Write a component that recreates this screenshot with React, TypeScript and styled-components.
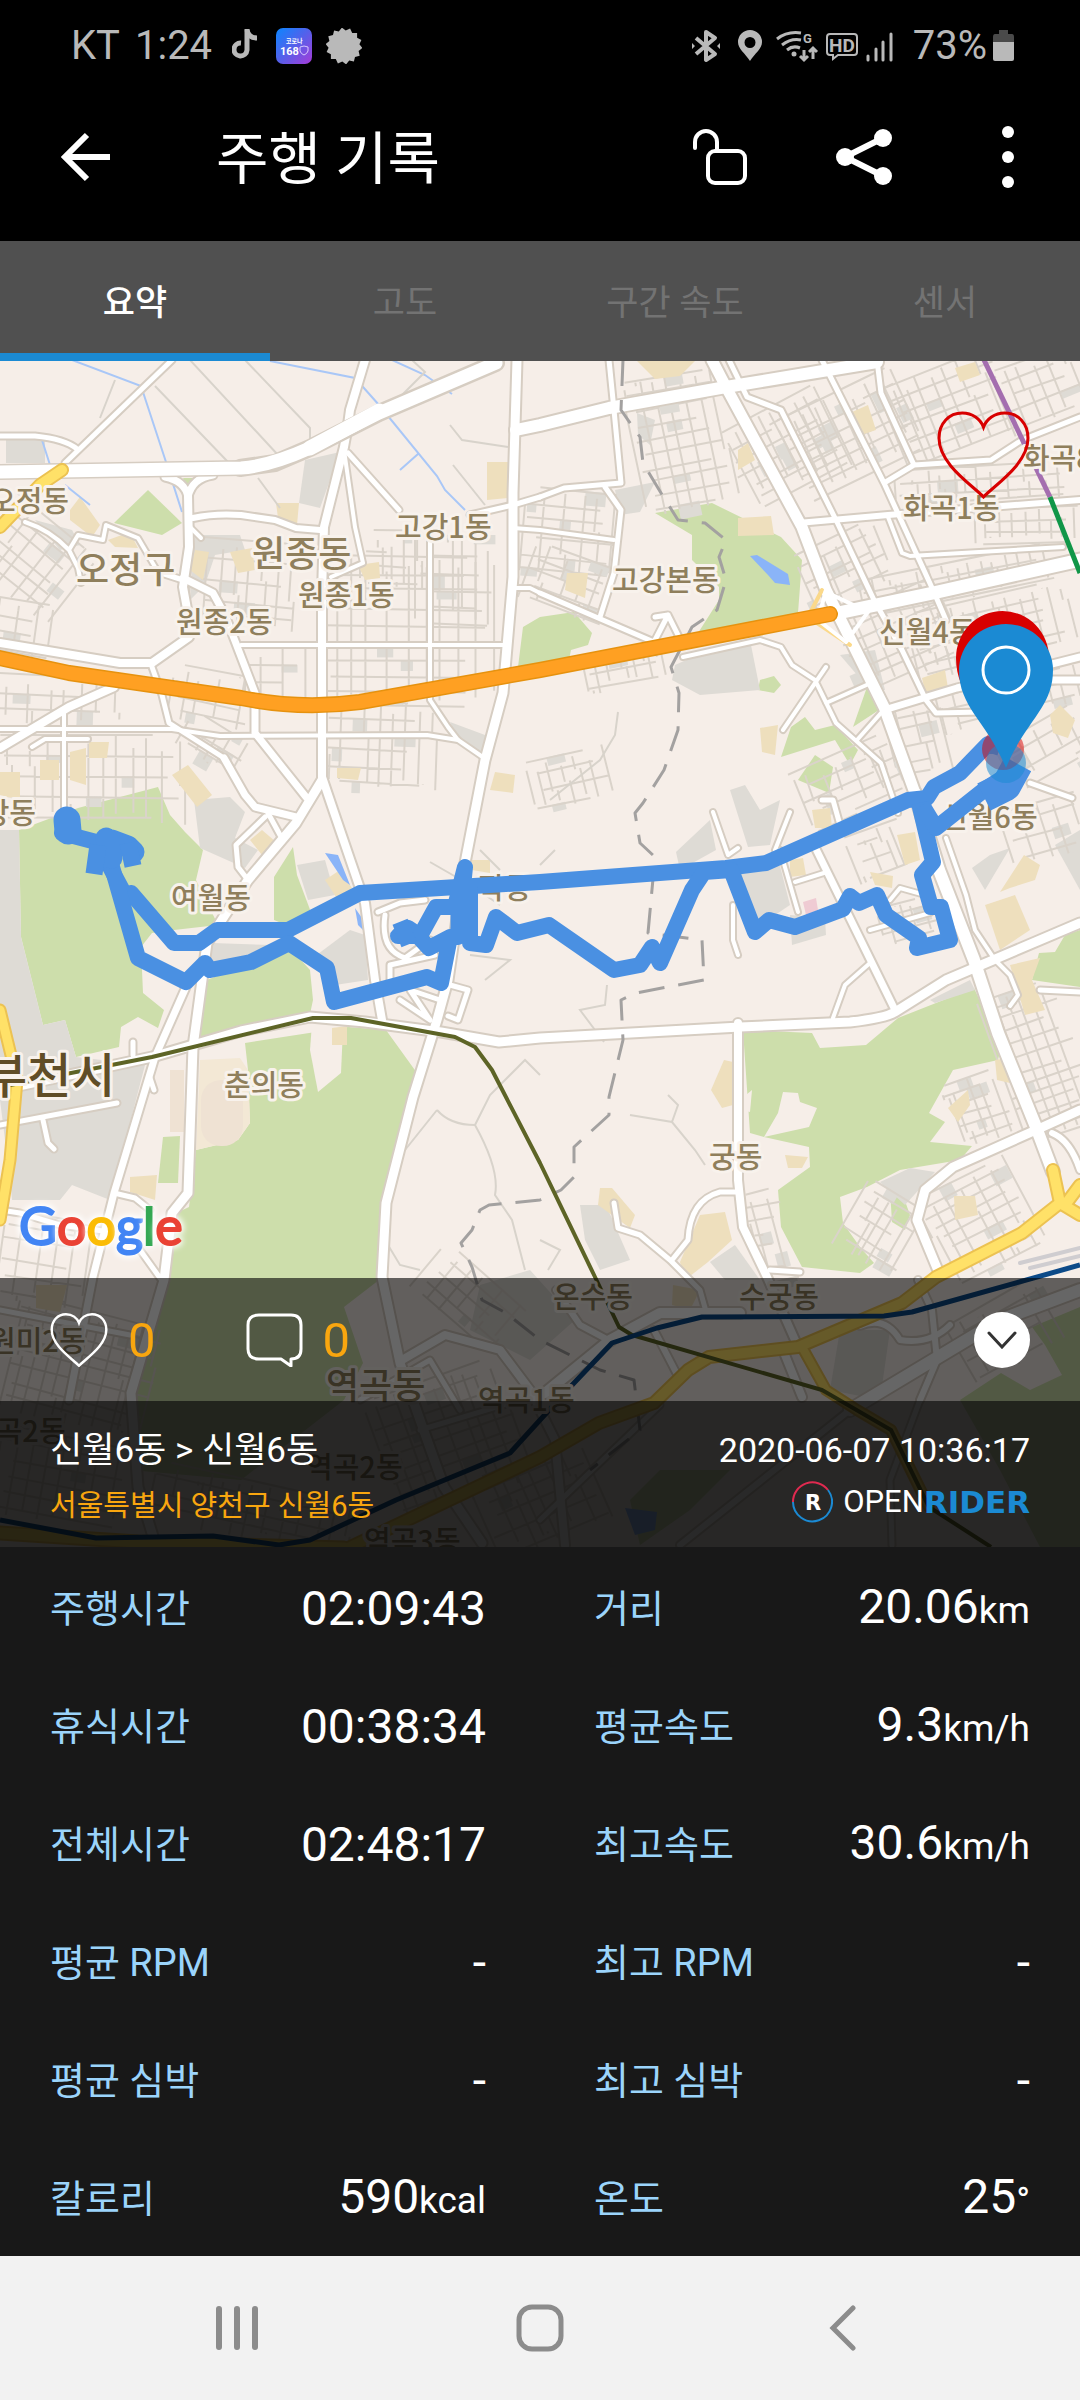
import React, { useState } from "react";
import styled, { createGlobalStyle, css } from "styled-components";

const GlobalStyle = createGlobalStyle`
  * { box-sizing: border-box; }
  body { margin: 0; background: #181818; }
  button { font: inherit; color: inherit; background: none; border: 0; padding: 0; cursor: pointer; }
`;

const FONT = `Roboto, "Noto Sans CJK KR", sans-serif`;

/* ---------- page frame ---------- */

const Screen = styled.div`
  display: flex;
  flex-direction: column;
  min-height: 100vh;
  background: #181818;
  color: #fff;
  font-family: ${FONT};
`;

const StatusBar = styled.div`
  display: flex;
  justify-content: space-between;
  align-items: center;
  height: 92px;
  padding: 0 66px 0 71px;
  background: #000;
  color: #b9b9b9;
  font-size: 40px;
  line-height: 48px;
`;

const StatusGroup = styled.div<{ $gap: number }>`
  display: flex;
  align-items: center;
  gap: ${(p) => p.$gap}px;
`;

const StatusText = styled.span<{ $space?: number }>`
  margin: 0 ${(p) => p.$space ?? 0}px;
`;

const BatteryReading = styled.span`
  display: flex;
  align-items: center;
  gap: 6px;
  margin-left: 10px;
`;

const AppBar = styled.header`
  display: flex;
  align-items: center;
  height: 149px;
  padding: 0 48px 20px 60px;
  background: #000;
`;

const Title = styled.h1`
  flex: 1;
  margin: 0 0 0 106px;
  padding-top: 6px;
  font-size: 57px;
  font-weight: 400;
  line-height: 68px;
`;

const ToolButtons = styled.div`
  display: flex;
  align-items: center;
  gap: 89px;
`;

const IconButton = styled.button`
  display: grid;
  place-items: center;
`;

const Tabs = styled.div`
  display: grid;
  grid-template-columns: repeat(4, 1fr);
  height: 120px;
  background: #505050;
`;

const Tab = styled.button<{ $active: boolean }>`
  padding: 14px 0 0;
  border-bottom: 8px solid transparent;
  font-size: 35px;
  line-height: 42px;
  color: #737373;
  ${(p) =>
    p.$active &&
    css`
      color: #fff;
      font-weight: 500;
      border-bottom-color: #1b8ad3;
    `}
`;

/* ---------- map ---------- */

const MapArea = styled.section`
  position: relative;
  display: flex;
  flex: 1;
  flex-direction: column;
  justify-content: flex-end;
  min-height: 1186px;
  overflow: hidden;
`;

const MapCanvas = styled.svg`
  position: absolute;
  inset: 0;
  width: 100%;
  height: 100%;
`;

const Favourite = styled.button`
  position: absolute;
  top: 50px;
  right: 50px;
`;

const GoogleMark = styled.div`
  position: relative;
  display: flex;
  padding: 0 19px;
  margin-bottom: 21px;
  font-family: Lato, sans-serif;
  font-size: 52px;
  line-height: 64px;
`;

const Letter = styled.span<{ $color: string }>`
  color: ${(p) => p.$color};
  -webkit-text-stroke: 2px ${(p) => p.$color};
  filter: drop-shadow(0 0 3px #fff) drop-shadow(0 0 3px #fff);
`;

const ActionBar = styled.div`
  position: relative;
  display: flex;
  align-items: center;
  justify-content: space-between;
  height: 123px;
  padding: 0 50px;
  background: rgba(0, 0, 0, 0.6);
`;

const Counters = styled.div`
  display: flex;
  gap: 90px;
`;

const Counter = styled.button`
  display: flex;
  align-items: center;
  gap: 20px;
  color: #f9a60f;
  font-size: 49px;
  line-height: 60px;
`;

const Count = styled.span`
  padding-top: 3px;
`;

const Collapse = styled.button`
  display: grid;
  place-items: center;
  width: 56px;
  height: 56px;
  border-radius: 50%;
  background: #fff;
`;

const RideInfo = styled.div`
  position: relative;
  display: flex;
  justify-content: space-between;
  height: 146px;
  padding: 26px 50px 0;
  background: rgba(3, 3, 3, 0.85);
`;

const InfoColumn = styled.div<{ $end?: boolean }>`
  display: flex;
  flex-direction: column;
  gap: ${(p) => (p.$end ? 7 : 9)}px;
  align-items: ${(p) => (p.$end ? "flex-end" : "flex-start")};
`;

const Route = styled.div`
  font-size: 35px;
  line-height: 48px;
`;

const Address = styled.div`
  font-size: 29px;
  line-height: 44px;
  color: #f9a60f;
`;

const StartedAt = styled.time`
  font-size: 34px;
  line-height: 46px;
`;

const Brand = styled.div`
  display: flex;
  align-items: center;
  font-size: 31px;
  line-height: 44px;

  svg {
    margin-right: 10px;
  }
`;

const BrandStrong = styled.span`
  font-family: "DejaVu Sans", sans-serif;
  font-weight: 700;
  font-size: 31px;
  color: #1b8ad3;
`;

/* ---------- statistics ---------- */

const Stats = styled.dl`
  display: grid;
  grid-template-columns: 1fr 1fr;
  column-gap: 108px;
  margin: 0;
  padding: 0 50px 1px;
`;

const Stat = styled.div`
  display: flex;
  justify-content: space-between;
  align-items: center;
  height: 118px;
  padding-top: 5px;
`;

const StatLabel = styled.dt`
  font-size: 38px;
  line-height: 56px;
  color: #9bd4fb;
`;

const StatValue = styled.dd`
  margin: 0;
  font-size: 48px;
  line-height: 60px;
`;

const Unit = styled.span`
  font-size: 37px;
`;

/* ---------- system navigation ---------- */

const SystemNav = styled.nav`
  display: grid;
  grid-template-columns: repeat(3, 1fr);
  height: 144px;
  padding: 0 86px;
  background: #f2f2f2;
`;

/* ---------- map data ---------- */

type Road = { d: string; w: number };

const greens = [
  "78,808 158,787 170,815 185,832 203,850 196,880 218,925 174,930 152,933 141,947 143,993 164,1010 158,1028 138,1017 121,1027 119,1047 76,1057 65,1020 43,1025 21,937 19,830",
  "293,847 297,875 312,915 289,926 274,920 274,877",
  "207,980 289,947 310,970 313,1000 310,1014 241,1027 196,1040",
  "245,1043 348,1027 386,1030 417,1073 386,1193 379,1280 344,1307 363,1363 344,1400 241,1480 131,1470 134,1401 168,1280 172,1215 189,1207 196,1150 238,1140 250,1123 248,1070",
  "743,1030 812,1033 820,1048 866,1045 898,1018 974,988 1001,1047 998,1060 953,1070 929,1113 945,1122 930,1142 972,1146 960,1160 900,1170 867,1187 840,1197 843,1223 860,1247 874,1263 860,1273 802,1267 781,1227 778,1190 810,1167 809,1147 764,1137 750,1133",
  "655,513 712,503 781,537 802,560 798,613 698,633 719,600 719,587 692,560 692,535",
  "518,667 523,627 540,617 574,612 592,633 588,645 571,650 569,660",
  "148,490 182,523 162,535 114,523",
  "1080,930 1065,935 1055,952 1039,953 1032,980 1080,987",
  "867,687 879,710 853,727",
  "805,717 815,730 835,725 858,750 850,765 835,740 781,757 791,727",
  "815,755 833,767 829,793 798,780",
  "760,680 774,676 781,685 774,693 758,690",
  "183,478 195,478 188,488",
  "1080,1307 1032,1327 1045,1345 1062,1375 1030,1390 1001,1373 960,1400 1000,1470 1040,1547 1080,1547",
  "163,1137 180,1136 178,1183 158,1183",
  "890,1190 900,1187 910,1215 905,1230 892,1222",
  "630,1500 660,1470 730,1470 690,1510 640,1545",
];

const clearings = [
  "783,1092 798,1093 800,1102 817,1108 809,1127 764,1137 778,1113",
  "313,1010 343,1028 341,1073 318,1092 310,1050",
  "740,1100 752,1090 750,1112 742,1110",
];

const greys = [
  "0,830 19,830 21,937 43,1025 65,1020 76,1057 145,1065 110,1200 72,1185 60,1200 12,1200 10,1180 0,1100",
  "194,800 230,797 245,812 235,838 258,850 245,868 200,848",
  "305,460 340,452 320,508 299,503",
  "6,440 45,440 45,463 6,463",
  "35,520 72,530 80,545 60,550",
  "195,535 240,535 245,550 215,555 205,585 190,600",
  "450,722 485,735 485,757 460,745",
  "675,665 720,645 750,640 760,690 700,695 672,680",
  "710,820 716,850 680,870 676,852",
  "730,790 745,785 760,810 780,800 770,845 748,847",
  "735,868 780,866 790,905 760,925",
  "790,915 825,918 826,935 792,945",
  "580,1205 606,1205 630,1260 600,1270 585,1240",
  "297,865 325,860 335,895 308,900",
  "310,960 350,930 365,935 368,980 335,985",
  "1055,845 1080,830 1080,890",
  "990,855 1010,848 985,890 972,868",
  "880,1182 910,1168 935,1172 905,1205",
  "710,1262 735,1245 760,1280 725,1280",
  "840,1330 890,1330 880,1400 830,1390",
  "480,1285 530,1270 575,1320 530,1360 470,1330",
  "840,655 875,650 885,690 870,690",
  "930,1000 970,980 975,990 935,1003",
  "212,943 272,945 290,948 250,962 210,966",
  "637,413 655,420 650,445 638,435",
  "615,490 655,482 640,512 620,515",
];

const tans = [
  "637,361 695,361 680,376 655,379",
  "852,412 868,405 876,430 864,434",
  "738,450 748,443 755,460 738,470",
  "738,518 771,516 774,535 738,536",
  "567,573 588,573 585,598 565,590",
  "922,678 945,670 948,688 925,692",
  "1050,715 1060,705 1075,720 1068,738 1053,733",
  "70,510 80,497 100,525 92,537 70,520",
  "108,540 130,532 138,548 115,547",
  "195,550 209,552 203,580 190,570",
  "230,552 252,548 255,570 238,573",
  "276,503 299,503 297,525 278,518",
  "487,462 508,462 508,498 487,500",
  "358,565 379,562 380,578 365,580",
  "172,775 188,765 212,795 197,807",
  "337,768 361,768 358,780 337,778",
  "40,760 59,760 59,780 40,780",
  "70,752 86,748 86,785 70,780",
  "89,742 109,742 107,758 89,758",
  "0,772 20,772 20,800 0,795",
  "495,772 515,775 513,793 490,790",
  "250,840 262,830 276,842 262,855",
  "325,880 340,870 352,888 338,900",
  "332,1028 347,1026 347,1045 332,1045",
  "130,1177 157,1175 155,1200 130,1192",
  "897,835 915,832 920,860 905,865",
  "1000,892 1024,855 1040,865 1035,880 1010,888",
  "985,905 1015,895 1030,930 1000,950",
  "1010,965 1040,958 1032,980 1045,1010 1025,1015",
  "790,860 803,858 806,875 790,877",
  "870,872 893,876 892,888 875,885",
  "724,1060 733,1062 733,1105 722,1108 711,1090",
  "785,1155 808,1157 802,1168 788,1168",
  "600,1188 612,1188 635,1215 630,1228 598,1205",
  "700,1215 725,1212 732,1240 708,1262 685,1280 680,1262",
  "954,1196 975,1196 978,1215 955,1220",
  "995,1060 1008,1058 1010,1083 997,1080",
  "36,1285 67,1285 60,1312 36,1308",
  "673,1285 700,1290 690,1310 672,1305",
  "948,1108 968,1090 970,1105 958,1122",
  "812,810 830,808 832,828 815,828",
  "760,728 778,725 775,755 762,752",
  "955,368 975,362 980,375 960,382",
  "472,860 490,860 490,873 472,870",
];

const waters = [
  "750,556 757,555 788,574 790,585 775,583 768,575",
  "325,853 338,855 350,885 343,880",
  "355,908 362,918 368,935 358,925",
  "625,1508 657,1512 655,1530 635,1535",
];

const roads: Road[] = [
  { w: 5, d: "M0 436L35 436Q65 439 77 449" },
  { w: 5, d: "M172 360L65 463" },
  { w: 4, d: "M25 522Q50 530 69 550L78 568L81 583M69 550L78 535L103 540L106 525L138 538L158 572" },
  { w: 5, d: "M158 572L183 580" },
  { w: 7, d: "M165 477Q185 481 188 497Q192 478 213 475" },
  { w: 8, d: "M188 495L189 547L183 587L189 620L189 637L152 663L120 663L0 643" },
  { w: 4, d: "M190 527L201 538" },
  { w: 7, d: "M183 578L213 593L225 615L255 693L255 733L306 797" },
  { w: 6, d: "M193 518Q215 513 241 515L275 520L296 528L320 530" },
  { w: 5, d: "M152 667L162 695L169 723L224 758" },
  { w: 7, d: "M224 758L245 795L255 807L296 817" },
  { w: 8, d: "M0 748L69 707L114 687" },
  { w: 4, d: "M0 729L172 729L220 736L427 735L458 740M64 710L64 810M88 739L45 739L32 747" },
  { w: 4, d: "M241 645L503 645M430 540L430 700L448 727L458 740L487 760" },
  { w: 5, d: "M348 453L399 510M470 515L513 505L540 497" },
  { w: 4, d: "M344 450L355 527L363 563L331 577M513 528L540 530L614 540M516 588L530 588L540 593" },
  { w: 8, d: "M365 360L350 410L348 425L344 447L324 527L322 593L322 777L339 827L365 903L375 980L382 1020" },
  { w: 9, d: "M322 780L296 823L248 880L225 915L207 943L193 1047L188 1193L172 1213L164 1280L131 1393L138 1487L155 1543" },
  { w: 5, d: "M265 817L236 845L238 867L248 880M268 813L280 835" },
  { w: 9, d: "M517 360L513 493L513 577L503 693L485 760L465 863L448 980L437 1020L413 1097L386 1203L382 1277L400 1363L420 1420L444 1487L482 1543" },
  { w: 7, d: "M186 987L155 1057L114 1193L93 1277L69 1400" },
  { w: 9, d: "M0 1090L152 1057L241 1031L310 1017L365 1022L441 1032L499 1042L540 1038L740 1027L850 1022Q885 1018 895 1012L946 980L1080 923" },
  { w: 8, d: "M738 1023L738 1180L743 1227L767 1277L795 1340M785 1355L802 1397" },
  { w: 5, d: "M0 1125L117 1103M43 1120L48 1143L54 1149M150 1078L154 1090M133 1042L133 1055" },
  { w: 5, d: "M114 1193L135 1198L150 1210M0 1210L20 1213L60 1225L110 1232M140 1250L160 1278" },
  { w: 12, d: "M516 430L540 425L609 408L726 387L877 362" },
  { w: 11, d: "M712 360L726 387L802 527L826 590L884 707L915 793" },
  { w: 12, d: "M915 793L939 870L974 960L998 1033L1036 1127L1053 1172" },
  { w: 4, d: "M946 838L966 895L975 930L995 960L1010 975L1018 995L1010 1006" },
  { w: 13, d: "M838 613L933 593L1080 560" },
  { w: 5, d: "M729 360L747 397L781 410L836 520L874 600L902 650L926 700L936 713L981 712" },
  { w: 5, d: "M822 360L884 483L933 590L946 620M877 360L881 393L914 465L991 460L1022 440L1080 417M914 465L884 483" },
  { w: 6, d: "M798 523L888 515L1080 500" },
  { w: 4, d: "M888 517L902 553L910 556L1063 547" },
  { w: 7, d: "M884 710L957 688L1080 657M1030 690L1045 680L1080 680" },
  { w: 5, d: "M609 360L614 410L621 483L564 488L540 497M605 487L621 510L614 573L600 617M540 593L654 642L668 615L655 617M668 615L683 645" },
  { w: 4, d: "M683 657L760 640L781 647L792 665L815 680L836 723L881 763L898 813M857 740L881 713M826 703L871 683M783 730L826 667" },
  { w: 7, d: "M815 847L895 1010" },
  { w: 4, d: "M713 812L728 855L738 848M775 850L790 812M733 905L733 940L738 955M780 850L798 912M795 882L827 872M870 930L930 913M870 963L845 985L833 1018M890 900L900 888L925 895" },
  { w: 5, d: "M822 800L833 800L840 825M1040 990L1080 992M1030 783L1072 798" },
  { w: 9, d: "M1080 1110L1036 1130L953 1167L925 1190L917 1220L939 1273" },
  { w: 6, d: "M1052 1133Q1070 1140 1080 1170M1040 1128L1080 1110M918 1280L932 1310L937 1360L920 1400" },
  { w: 5, d: "M614 1203L618 1228L640 1235L670 1260L700 1290L707 1315M672 1260L688 1240Q690 1200 720 1192L736 1192M770 1270L800 1272" },
  { w: 12, d: "M1080 1290L1000 1320L850 1410" },
  { w: 6, d: "M850 1410L680 1545" },
  { w: 10, d: "M740 1313L660 1313L610 1340L545 1393" },
  { w: 6, d: "M556 1290L580 1325L612 1342M654 1330L680 1380M860 1326Q885 1315 900 1340Q930 1345 950 1325" },
  { w: 8, d: "M402 1360L445 1335L500 1350L530 1390L555 1440L565 1545" },
  { w: 5, d: "M360 1400L430 1360L460 1410M0 1310L130 1335M420 1430L520 1400M540 1520L660 1405M892 1545L890 1480L920 1400" },
  { w: 5, d: "M378 912L400 903L425 900M385 915Q380 950 405 958L430 940M390 990L390 965L435 955M400 1000L430 1020L410 990L440 1000M450 985L468 990L458 1020L448 1016" },
];

const rails: { d: string; color: string; w: number }[] = [
  { color: "#5d6426", w: 4, d: "M0 1087L152 1057L313 1018L351 1018L455 1037L475 1047L492 1070L540 1163L595 1277L619 1327L632 1335L822 1390L891 1430L929 1507L991 1547" },
  { color: "#0c4a88", w: 5, d: "M1080 1265L912 1312L884 1316L702 1317L657 1328L612 1343L574 1383L540 1420L510 1453L396 1500L310 1540L279 1545L213 1536L96 1538L0 1520" },
  { color: "#a46eaf", w: 5, d: "M984 360L1050 497" },
  { color: "#109648", w: 5, d: "M1050 497L1080 573" },
];

const yellows: Road[] = [
  { w: 13, d: "M62 470L40 485L0 527" },
  { w: 12, d: "M0 1010L17 1080L10 1160L0 1220" },
  { w: 13, d: "M1053 1170L1060 1203L1022 1233L936 1277L902 1303L798 1347L709 1357L688 1370L654 1403L599 1423L540 1457L344 1550" },
  { w: 13, d: "M1060 1203L1080 1215M1065 1205L1080 1185" },
  { w: 11, d: "M802 1347L826 1390L857 1410L891 1430L929 1507" },
  { w: 14, d: "M0 1533L138 1542L344 1548" },
];

const creeks =
  "M72 360L141 386L166 462L182 512M270 361L355 378L379 405L437 476L445 490L465 510M392 360L425 375L452 394M65 485L90 505M42 440L50 465M400 470L418 454";

const lanes =
  "M115 380L100 418M155 386L228 462M190 360L278 455M245 360L310 428L310 440M258 478L280 508M450 425L462 440L508 447M453 465L485 505M412 360L425 372L402 395M550 800L600 760L615 735L618 712M500 870L480 850M430 862L470 885L500 905M470 955L510 960L485 980M437 1110Q450 1125 475 1125Q500 1170 495 1195L512 1220L525 1270M437 1110L405 1150M475 1125L490 1095L525 1060L540 1075M630 1115L672 1122L695 1150L705 1165M672 1122L678 1105L668 1095M604 1042L580 1010L605 1005L607 985M540 865L555 850M385 1240L400 1265L420 1270M540 1240L560 1250L548 1270";

const border =
  "M623 360L621 410L640 437L643 463L661 493L678 520L705 523L726 540L719 557L726 580L717 610L692 627L671 667L679 693L678 730L664 770L643 803L635 813L640 843L655 857L648 933L702 940L704 980L636 993L621 1000L623 1040L609 1097L609 1115L574 1147L574 1177L561 1190L540 1200L489 1205L480 1210L472 1230L461 1243L472 1267L482 1300L506 1313L540 1340L600 1370L634 1380L640 1430L590 1470";

/* [centre x, centre y, width, height, angle, street spacing, seed] */
const districts: number[][] = [
  [30, 560, 110, 90, 38, 15, 3],
  [20, 630, 70, 60, 8, 15, 4],
  [90, 780, 190, 90, 0, 17, 5],
  [60, 700, 140, 50, 2, 17, 6],
  [245, 585, 110, 90, 4, 17, 7],
  [410, 630, 175, 150, 0, 17, 8],
  [280, 680, 70, 70, 0, 17, 9],
  [210, 700, 80, 60, 10, 15, 10],
  [380, 745, 110, 90, 2, 17, 11],
  [215, 745, 70, 40, 30, 15, 12],
  [390, 560, 60, 60, 0, 17, 13],
  [460, 580, 90, 90, 0, 17, 14],
  [570, 535, 95, 90, 5, 15, 15],
  [570, 585, 90, 60, 20, 15, 16],
  [680, 450, 90, 120, -12, 13, 17],
  [670, 390, 90, 30, -10, 13, 18],
  [785, 450, 90, 110, 62, 14, 19],
  [850, 435, 90, 130, 64, 14, 20],
  [950, 410, 120, 90, -22, 14, 21],
  [1040, 390, 80, 70, -22, 14, 22],
  [980, 485, 170, 40, -4, 13, 23],
  [1030, 525, 110, 36, -2, 13, 24],
  [845, 570, 70, 90, 64, 14, 25],
  [960, 580, 200, 40, -12, 13, 26],
  [900, 640, 90, 110, 66, 14, 27],
  [990, 630, 160, 70, -14, 14, 28],
  [1010, 700, 140, 40, -14, 14, 29],
  [920, 740, 60, 80, -14, 14, 30],
  [1050, 750, 60, 90, 60, 15, 31],
  [850, 780, 60, 110, 66, 15, 32],
  [630, 670, 90, 36, -12, 14, 33],
  [570, 780, 80, 55, -14, 14, 34],
  [1045, 830, 80, 60, -18, 15, 36],
  [1040, 1060, 80, 150, -20, 13, 37],
  [980, 1110, 60, 70, -20, 13, 38],
  [985, 1220, 110, 100, -28, 15, 39],
  [880, 1230, 70, 80, 30, 14, 40],
  [770, 1240, 40, 100, -15, 15, 41],
  [45, 1260, 90, 90, 8, 17, 42],
  [80, 1370, 150, 120, 14, 15, 43],
  [60, 1480, 130, 90, 10, 17, 44],
  [250, 1510, 200, 60, 12, 17, 45],
  [450, 1440, 140, 130, -20, 15, 46],
  [470, 1300, 110, 60, 40, 17, 47],
  [540, 1500, 120, 90, -24, 17, 48],
  [1010, 1330, 110, 70, -30, 17, 49],
  [880, 850, 60, 50, -22, 15, 50],
  [910, 920, 60, 40, -16, 13, 51],
];

function random(seed: number) {
  let s = seed * 7919 + 13;
  return () => {
    s = (s * 16807) % 2147483647;
    return s / 2147483647;
  };
}

function District({ box }: { box: number[] }) {
  const [cx, cy, w, h, angle, gap, seed] = box;
  const next = random(seed);
  let d = "";
  const blocks: React.ReactNode[] = [];
  for (let y = -h / 2; y <= h / 2; y += gap * (0.7 + next() * 0.6)) {
    const a = -w / 2 + next() * gap;
    const b = w / 2 - next() * gap * 2;
    d += `M${a.toFixed(1)} ${y.toFixed(1)}L${b.toFixed(1)} ${(y + next() * 3).toFixed(1)}`;
    if (next() > 0.55) {
      blocks.push(
        <rect key={y} x={a + next() * w * 0.7} y={y} width={8 + next() * 14} height={7 + next() * 9} />
      );
    }
  }
  for (let x = -w / 2; x <= w / 2; x += gap * (0.7 + next() * 0.7)) {
    const split = (next() - 0.5) * h;
    const top = -h / 2 + next() * gap;
    d += `M${x.toFixed(1)} ${top.toFixed(1)}L${x.toFixed(1)} ${split.toFixed(1)}`;
    d += `M${(x + (next() > 0.6 ? 5 : 0)).toFixed(1)} ${split.toFixed(1)}V${(h / 2 - next() * gap).toFixed(1)}`;
  }
  return (
    <g transform={`translate(${cx} ${cy}) rotate(${angle})`}>
      <g fill="#dedbd5">{blocks}</g>
      <path d={d} fill="none" stroke="#dad3ca" strokeWidth="2" />
    </g>
  );
}

/* [text, left x, baseline, size] */
const labels: [string, number, number, number][] = [
  ["오정동", -11, 512, 29],
  ["오정구", 76, 583, 36],
  ["원종동", 252, 567, 36],
  ["고강1동", 395, 538, 29],
  ["원종1동", 298, 606, 29],
  ["원종2동", 176, 633, 29],
  ["고강본동", 612, 591, 29],
  ["화곡1동", 903, 519, 29],
  ["화곡8동", 1023, 469, 29],
  ["신월4동", 879, 643, 29],
  ["신월6동", 941, 828, 29],
  ["도당동", -44, 824, 29],
  ["작동", 478, 899, 29],
  ["여월동", 171, 909, 29],
  ["춘의동", 224, 1096, 29],
  ["궁동", 709, 1168, 29],
  ["온수동", 553, 1308, 29],
  ["수궁동", 739, 1308, 29],
  ["역곡동", 326, 1399, 36],
  ["역곡1동", 478, 1411, 29],
  ["역곡2동", 306, 1478, 29],
  ["역곡3동", 364, 1552, 29],
  ["원미2동", -11, 1352, 29],
  ["심곡2동", -31, 1442, 29],
];

const track = [
  "M67 820L62 833L100 843L112 841L110 867L126 897L131 893L174 943L199 943L217 930L288 930L360 893L540 882L726 868L766 863L908 800L927 798L934 787L960 773L988 744L1000 748",
  "M110 860L138 958L186 982L205 963L210 970L251 962L289 943L327 968L334 1002L427 977L441 983L450 937L429 948L418 936L398 936L408 928L420 936L436 907L455 907L465 867L458 937L470 890L470 943L486 945L496 917L517 933L549 925L614 970L640 965L652 947L660 963L692 890L704 872L731 870L755 932L769 920L795 927L843 909L850 896L859 903L877 895L886 915L919 938L917 948L950 940L941 907L931 907L922 875L933 862L919 803",
  "M922 805L936 828L984 790L1012 772",
];

function RideMap() {
  return (
    <MapCanvas viewBox="0 361 1080 1186" preserveAspectRatio="xMidYMid slice" role="img" aria-label="주행 경로 지도">
      <rect y="361" width="1080" height="1186" fill="#f6eee8" />
      <g fill="#cddeab">{greens.map((p) => <polygon key={p} points={p} />)}</g>
      <g fill="#f6eee8">{clearings.map((p) => <polygon key={p} points={p} />)}</g>
      <g fill="#dedbd5">{greys.map((p) => <polygon key={p} points={p} />)}</g>
      {districts.map((box) => <District key={box[6]} box={box} />)}
      <g fill="#eedfbd">{tans.map((p) => <polygon key={p} points={p} />)}</g>
      <path d="M240 1058L248 1070L250 1123L238 1140L196 1150L200 1060Z" fill="#f3e8d5" />
      <rect x="201" y="1080" width="42" height="66" rx="20" fill="#efe2d3" />
      <rect x="170" y="1070" width="14" height="62" fill="#efe2d3" />
      <polygon points="803,902 816,898 818,910 806,915" fill="#efcbd3" />
      <g fill="#8ab4f8">{waters.map((p) => <polygon key={p} points={p} />)}</g>
      <path d={creeks} fill="none" stroke="#a9c7f7" strokeWidth="2" />
      <path d={lanes} fill="none" stroke="#d8d3cb" strokeWidth="2" />
      <g fill="none" strokeLinejoin="round" strokeLinecap="round">
        {roads.map((r) => <path key={r.d} d={r.d} stroke="#d6cdc2" strokeWidth={r.w + 4} />)}
        {roads.map((r) => <path key={r.d} d={r.d} stroke="#fff" strokeWidth={r.w} />)}
        <path d="M240 468L275 463L310 448L379 413L496 363" stroke="#d6cdc2" strokeWidth="18" />
        <path d="M0 472L241 468" stroke="#d6cdc2" strokeWidth="16" />
        <path d="M0 472L241 468Q270 466 310 448L379 413L496 363" stroke="#fff" strokeWidth="13" />
        <path d="M310 448L379 411" stroke="#fff" strokeWidth="15" />
        <path d={border} stroke="#a3a1a0" strokeWidth="3" strokeDasharray="26 14" strokeLinecap="butt" />
        <path d="M822 590L808 617L850 645" stroke="#fbd98a" strokeWidth="4" />
        <path d="M826 590L818 620L846 642L868 612L826 592" stroke="#fff" strokeWidth="4" />
        {yellows.map((r) => <path key={r.d} d={r.d} stroke="#ecc252" strokeWidth={r.w + 1} />)}
        {yellows.map((r) => <path key={r.d} d={r.d} stroke="#ffe168" strokeWidth={r.w - 3} />)}
        <path d="M-10 656L69 673L241 698Q300 710 360 702L540 670L830 614" stroke="#e6920f" strokeWidth="16" />
        <path d="M-10 656L69 673L241 698Q300 710 360 702L540 670L830 614" stroke="#ffa022" strokeWidth="13" />
        <path d="M1020 1263L1080 1248M1030 1268L1080 1256" stroke="#cfcdd0" strokeWidth="4" />
        {rails.map((r) => <path key={r.d} d={r.d} stroke={r.color} strokeWidth={r.w} strokeLinecap="butt" />)}
      </g>
      <g
        fontFamily='"Noto Sans CJK KR", sans-serif'
        fontWeight="500"
        fill="#8f7f5c"
        stroke="#f8f2ec"
        strokeWidth="6"
        strokeLinejoin="round"
        paintOrder="stroke"
      >
        {labels.map(([text, x, y, size]) => (
          <text key={text} x={x} y={y} fontSize={size}>{text}</text>
        ))}
        <text x="-17" y="1093" fontSize="48" fill="#604d27">부천시</text>
      </g>
      <g fill="none" stroke="#4a90e2" strokeWidth="16" strokeLinejoin="round">
        {track.map((d) => <path key={d} d={d} />)}
        <path d="M67 820L68 831" strokeWidth="27" strokeLinecap="round" />
        <path d="M106 838L112 858M112 840L128 846L134 852" strokeWidth="21" strokeLinecap="round" />
        <path d="M94 874L98 845M128 843L133 866" strokeWidth="17" />
        <path d="M984 797L1006 786L1018 764" strokeWidth="30" />
        <path d="M464 880L464 932" strokeWidth="27" />
        <path d="M397 936L412 930" strokeWidth="24" />
      </g>
      <circle cx="1003" cy="749" r="21" fill="#d80000" fillOpacity=".5" />
      <circle cx="1006" cy="763" r="20" fill="#1b8ad3" fillOpacity=".55" />
      <path d="M1003 755C985 715 956 695 956 658A46.500 47 0 0 1 1049 658C1049 695 1020 715 1003 755Z" fill="#d80000" />
      <path d="M1006 768C987 721 959 708 959 670A47 46 0 0 1 1053 670C1053 708 1025 721 1006 768Z" fill="#1b8ad3" />
      <circle cx="1006" cy="670" r="23" fill="none" stroke="#fff" strokeWidth="3" />
    </MapCanvas>
  );
}

/* ---------- icons ---------- */

const HEART = "M46 85C36 74 2 53 2 27C2 12 12 2 25 2C35 2 43 8 46 16C49 8 57 2 67 2C80 2 90 12 90 27C90 53 56 74 46 85Z";

const Note = () => (
  <svg width="25" height="30" viewBox="0 0 25 30" fill="none" stroke="#b9b9b9" strokeWidth="5">
    <path d="M15 0V21A6.500 6.500 0 1 1 9 14" />
    <path d="M15 1C16 6 19 9 25 9" />
  </svg>
);

const CoronaBadge = () => (
  <svg width="36" height="36" viewBox="0 0 36 36">
    <defs>
      <linearGradient id="badge" x1="0" y1="0" x2="1" y2="1">
        <stop offset="0" stopColor="#0b86ff" />
        <stop offset=".5" stopColor="#5560ea" />
        <stop offset="1" stopColor="#a63bd8" />
      </linearGradient>
    </defs>
    <rect width="36" height="36" rx="7" fill="url(#badge)" />
    <g fill="#fff" fontWeight="700">
      <text x="10" y="15" fontSize="6" fontFamily="Noto Sans CJK KR, sans-serif">코로나</text>
      <text x="4" y="27" fontSize="11" fontFamily="Roboto, sans-serif">168</text>
    </g>
    <path d="M24 19L28 18L32 19V23Q31 26 28 27Q25 26 24 23Z" fill="none" stroke="#d7c8ff" />
  </svg>
);

const Burst = () => {
  const points = Array.from({ length: 28 }, (_, i) => {
    const r = i % 2 ? 15.5 : 18.5;
    const a = (i / 28) * Math.PI * 2 + 0.11;
    return `${(18 + r * Math.cos(a)).toFixed(1)},${(18 + r * Math.sin(a)).toFixed(1)}`;
  }).join(" ");
  return (
    <svg width="36" height="36" viewBox="0 0 36 36">
      <polygon points={points} fill="#b9b9b9" />
    </svg>
  );
};

const StatusIcons = () => (
  <svg width="204" height="34" viewBox="690 27 204 34" fill="none" stroke="#b9b9b9" strokeWidth="3">
    <path d="M695 36L714 52L705 58V30L714 36L695 52" strokeWidth="4" strokeLinejoin="round" />
    <path d="M691 41L694 44L691 47ZM719 41L716 44L719 47Z" fill="#b9b9b9" stroke="none" />
    <path d="M749 59C744 51 737 47 737 40A12 12 0 0 1 761 40C761 47 754 51 749 59ZM749 35A5.500 5.500 0 1 0 749 46A5.500 5.500 0 0 0 749 35Z" fill="#b9b9b9" stroke="none" fillRule="evenodd" />
    <path d="M776 37Q786 29 800 31M781 43Q790 36 800 38M786 48Q792 43 799 46" />
    <circle cx="793" cy="52" r="2.500" fill="#b9b9b9" stroke="none" />
    <text x="802" y="41" fontSize="13" fontWeight="700" fontFamily="Roboto, sans-serif" fill="#b9b9b9" stroke="none">G</text>
    <path d="M803 48V58M799 54L803 58L807 54M812 57V47M808 50L812 46L816 50" />
    <path d="M829 32H853Q856 32 856 35V50Q856 53 853 53H837L832 57V53H829Q826 53 826 50V35Q826 32 829 32Z" strokeWidth="2" />
    <text x="828" y="50" fontSize="19" fontWeight="700" fontFamily="Roboto, sans-serif" fill="#b9b9b9" stroke="none">HD</text>
    <path d="M867 58V54M875 58V47M882 58V40M890 58V32" strokeWidth="3" strokeLinecap="round" />
  </svg>
);

const Battery = () => (
  <svg width="21" height="32" viewBox="0 0 21 32">
    <path d="M6 0H15V4H19Q21 4 21 7V12H0V7Q0 4 2 4H6Z" fill="#4a4a4a" />
    <path d="M0 12H21V29Q21 31 19 31H2Q0 31 0 29Z" fill="#b9b9b9" />
  </svg>
);

const BackArrow = () => (
  <svg width="50" height="50" viewBox="0 0 50 50" fill="none" stroke="#fff" strokeWidth="6">
    <path d="M27 3L5 25L27 47M5 25H50" />
  </svg>
);

const Unlock = () => (
  <svg width="54" height="56" viewBox="0 0 54 56" fill="none" stroke="#fff" strokeWidth="4" strokeLinecap="round">
    <path d="M2 19V13A11 11 0 0 1 24 13V20" />
    <rect x="15" y="22" width="37" height="32" rx="7" />
  </svg>
);

const Share = () => (
  <svg width="56" height="56" viewBox="0 0 56 56" fill="#fff" stroke="#fff">
    <path d="M47 9L9 28L47 47" fill="none" strokeWidth="6" />
    <g stroke="none">
      <circle cx="47" cy="9" r="9" />
      <circle cx="9" cy="28" r="9" />
      <circle cx="47" cy="47" r="9" />
    </g>
  </svg>
);

const More = () => (
  <svg width="51" height="62" viewBox="0 0 51 62" fill="#fff">
    <circle cx="27" cy="6" r="6" />
    <circle cx="27" cy="31" r="6" />
    <circle cx="27" cy="56" r="6" />
  </svg>
);

const Comment = () => (
  <svg width="57" height="54" viewBox="0 0 57 54" fill="none" stroke="#fff" strokeWidth="3" strokeLinejoin="round">
    <path d="M13 2H45Q55 2 55 12V36Q55 46 45 46V53L35 46H13Q2 46 2 36V12Q2 2 13 2Z" />
  </svg>
);

const Emblem = () => (
  <svg width="41" height="42" viewBox="0 0 41 42" fill="none" strokeWidth="2">
    <path d="M1 21A19.500 19.500 0 0 1 36 9" stroke="#e02a50" />
    <path d="M36 9A19.500 19.500 0 1 1 1 21" stroke="#1b8ad3" />
    <text x="13" y="29" fontSize="21" fontWeight="700" fontFamily="DejaVu Sans, sans-serif" fill="#fff">R</text>
  </svg>
);

/* ---------- screen ---------- */

const tabNames = ["요약", "고도", "구간 속도", "센서"];

const stats: { label: string; value: string; unit?: string }[] = [
  { label: "주행시간", value: "02:09:43" },
  { label: "거리", value: "20.06", unit: "km" },
  { label: "휴식시간", value: "00:38:34" },
  { label: "평균속도", value: "9.3", unit: "km/h" },
  { label: "전체시간", value: "02:48:17" },
  { label: "최고속도", value: "30.6", unit: "km/h" },
  { label: "평균 RPM", value: "-" },
  { label: "최고 RPM", value: "-" },
  { label: "평균 심박", value: "-" },
  { label: "최고 심박", value: "-" },
  { label: "칼로리", value: "590", unit: "kcal" },
  { label: "온도", value: "25", unit: "°" },
];

const google: [string, string][] = [
  ["G", "#4285f4"],
  ["o", "#ea4335"],
  ["o", "#fbbc05"],
  ["g", "#4285f4"],
  ["l", "#34a853"],
  ["e", "#ea4335"],
];

export default function App() {
  const [active, setActive] = useState(0);
  return (
    <Screen>
      <GlobalStyle />
      <StatusBar>
        <StatusGroup $gap={14}>
          <span>KT</span>
          <StatusText $space={1}>1:24</StatusText>
          <StatusText $space={5}><Note /></StatusText>
          <CoronaBadge />
          <Burst />
        </StatusGroup>
        <StatusGroup $gap={8}>
          <StatusIcons />
          <BatteryReading>
            73%
            <Battery />
          </BatteryReading>
        </StatusGroup>
      </StatusBar>

      <AppBar>
        <IconButton aria-label="뒤로"><BackArrow /></IconButton>
        <Title>주행 기록</Title>
        <ToolButtons>
          <IconButton aria-label="잠금 해제"><Unlock /></IconButton>
          <IconButton aria-label="공유"><Share /></IconButton>
          <IconButton aria-label="더보기"><More /></IconButton>
        </ToolButtons>
      </AppBar>

      <Tabs role="tablist">
        {tabNames.map((name, i) => (
          <Tab key={name} role="tab" aria-selected={i === active} $active={i === active} onClick={() => setActive(i)}>
            {name}
          </Tab>
        ))}
      </Tabs>

      <MapArea>
        <RideMap />
        <Favourite aria-label="즐겨찾기">
          <svg width="93" height="88" viewBox="0 0 92 87" fill="none" stroke="#d80000" strokeWidth="3">
            <path d={HEART} />
          </svg>
        </Favourite>
        <GoogleMark>
          {google.map(([letter, color], i) => (
            <Letter key={i} $color={color}>{letter}</Letter>
          ))}
        </GoogleMark>
        <ActionBar>
          <Counters>
            <Counter aria-label="좋아요 0">
              <svg width="58" height="54" viewBox="0 0 92 87" fill="none" stroke="#fff" strokeWidth="4">
                <path d={HEART} />
              </svg>
              <Count>0</Count>
            </Counter>
            <Counter aria-label="댓글 0">
              <Comment />
              <Count>0</Count>
            </Counter>
          </Counters>
          <Collapse aria-label="접기">
            <svg width="30" height="18" viewBox="0 0 30 18" fill="none" stroke="#333" strokeWidth="3" strokeLinecap="round">
              <path d="M2 2L15 16L28 2" />
            </svg>
          </Collapse>
        </ActionBar>
        <RideInfo>
          <InfoColumn>
            <Route>신월6동 &gt; 신월6동</Route>
            <Address>서울특별시 양천구 신월6동</Address>
          </InfoColumn>
          <InfoColumn $end>
            <StartedAt dateTime="2020-06-07T10:36:17">2020-06-07 10:36:17</StartedAt>
            <Brand>
              <Emblem />
              OPEN<BrandStrong>RIDER</BrandStrong>
            </Brand>
          </InfoColumn>
        </RideInfo>
      </MapArea>

      <Stats>
        {stats.map((s) => (
          <Stat key={s.label}>
            <StatLabel>{s.label}</StatLabel>
            <StatValue>
              {s.value}
              {s.unit && <Unit>{s.unit}</Unit>}
            </StatValue>
          </Stat>
        ))}
      </Stats>

      <SystemNav>
        <IconButton aria-label="최근 앱">
          <svg width="44" height="46" viewBox="0 0 44 46" stroke="#8c8c8c" strokeWidth="6" strokeLinecap="round">
            <path d="M4 4V42M22 4V42M40 4V42" />
          </svg>
        </IconButton>
        <IconButton aria-label="홈">
          <svg width="48" height="48" viewBox="0 0 48 48" fill="none" stroke="#8c8c8c" strokeWidth="5">
            <rect x="3" y="3" width="42" height="42" rx="13" />
          </svg>
        </IconButton>
        <IconButton aria-label="이전">
          <svg width="28" height="46" viewBox="0 0 28 46" fill="none" stroke="#8c8c8c" strokeWidth="5" strokeLinecap="round">
            <path d="M24 3L4 23L24 43" />
          </svg>
        </IconButton>
      </SystemNav>
    </Screen>
  );
}
